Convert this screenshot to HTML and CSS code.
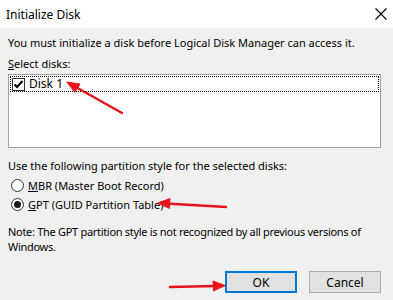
FILE: index.html
```html
<!DOCTYPE html>
<html>
<head>
<meta charset="utf-8">
<link rel="stylesheet" href="styles.css">
</head>
<body>
<div class="dialog">
  <div class="titlebar">
    <span class="title">Initialize Disk</span>
    <svg class="close" width="12" height="12" viewBox="0 0 12 12"><path d="M0.5 0.5 L11.5 11.5 M11.5 0.5 L0.5 11.5" stroke="#000" stroke-width="1.1" fill="none"/></svg>
  </div>
  <div class="content">
    <p class="line first">You must initialize a disk before Logical Disk Manager can access it.</p>
    <p class="line label"><u>S</u>elect disks:</p>
    <div class="listbox">
      <div class="item">
        <span class="checkbox"><svg width="11" height="11" viewBox="0 0 11 11"><path d="M1.5 5.5 L4 8 L9.5 2" stroke="#000" stroke-width="2" fill="none"/></svg></span>
        <span class="itemtext">Disk 1</span>
      </div>
    </div>
    <p class="line use">Use the following partition style for the selected disks:</p>
    <div class="radios">
      <div class="radio"><span class="circle"></span><span><u>M</u>BR (Master Boot Record)</span></div>
      <div class="radio"><span class="circle on"><span class="dot"></span></span><span><u>G</u>PT (GUID Partition Table)</span></div>
    </div>
    <p class="note">Note: The GPT partition style is not recognized by all previous versions of<br>Windows.</p>
    <div class="buttons">
      <div class="btn default">OK</div>
      <div class="btn">Cancel</div>
    </div>
  </div>
  <svg class="arrows" width="393" height="300" viewBox="0 0 393 300">
    <g stroke="#e8141b" stroke-width="2.5" fill="#e8141b" stroke-linecap="round">
      <line x1="122" y1="113" x2="74" y2="86"/>
      <polygon points="67,82 80,84 75,92" stroke-width="1"/>
      <line x1="226" y1="207" x2="166" y2="203.5"/>
      <polygon points="158,203 170,198.5 169.5,208" stroke-width="1"/>
      <line x1="170" y1="287" x2="216" y2="286"/>
      <polygon points="225,285.5 213,281 213.5,290.5" stroke-width="1"/>
    </g>
  </svg>
</div>
</body>
</html>
```
FILE: styles.css
```css
html, body {
  margin: 0;
  padding: 0;
}
body {
  width: 393px;
  height: 300px;
  overflow: hidden;
  background: #f0f0f0;
  font-family: "Noto Sans", "Open Sans", sans-serif;
  font-size: 11px;
  color: #000;
}
.dialog {
  position: relative;
  width: 393px;
  height: 300px;
  background: #f0f0f0;
}
.titlebar {
  height: 28px;
  background: #fff;
  display: flex;
  align-items: center;
  justify-content: space-between;
  padding: 0 6px 0 6px;
  font-size: 12px;
}
.content {
  padding: 0 12px 0 8px;
}
.line {
  margin: 0;
  height: 16px;
  line-height: 16px;
  white-space: nowrap;
}
.first {
  margin-top: 7px;
}
.label {
  margin-top: 5px;
}
.listbox {
  margin-top: 2px;
  width: 369px;
  height: 70px;
  background: #fff;
  border: 1px solid #a0a0a0;
  padding: 1px;
}
.item {
  height: 14px;
  border: 1px dotted #000;
  display: flex;
  align-items: center;
  gap: 4px;
  padding-left: 1px;
}
.checkbox {
  width: 11px;
  height: 11px;
  border: 1px solid #333;
  background: #fff;
  display: flex;
}
.itemtext {
  font-size: 12px;
  line-height: 14px;
}
.use {
  margin-top: 10px;
}
.radios {
  margin-top: 2px;
  display: flex;
  flex-direction: column;
}
.radio {
  height: 19px;
  display: flex;
  align-items: center;
  gap: 4px;
  padding-left: 3px;
  white-space: nowrap;
}
.circle {
  width: 11px;
  height: 11px;
  border: 1px solid #333;
  border-radius: 50%;
  background: #fff;
  display: flex;
  align-items: center;
  justify-content: center;
}
.dot {
  width: 7px;
  height: 7px;
  border-radius: 50%;
  background: #1a1a1a;
}
.note {
  margin: 10px 0 0 0;
  line-height: 15px;
  white-space: nowrap;
  letter-spacing: -0.3px;
}
.buttons {
  margin-top: 17px;
  display: flex;
  justify-content: flex-end;
  gap: 12px;
}
.btn {
  box-sizing: border-box;
  width: 72px;
  height: 22px;
  background: #e1e1e1;
  border: 1px solid #adadad;
  display: flex;
  align-items: center;
  justify-content: center;
  font-size: 12px;
}
.btn.default {
  border: 2px solid #0078d7;
}
.arrows {
  position: absolute;
  left: 0;
  top: 0;
  pointer-events: none;
}
```
